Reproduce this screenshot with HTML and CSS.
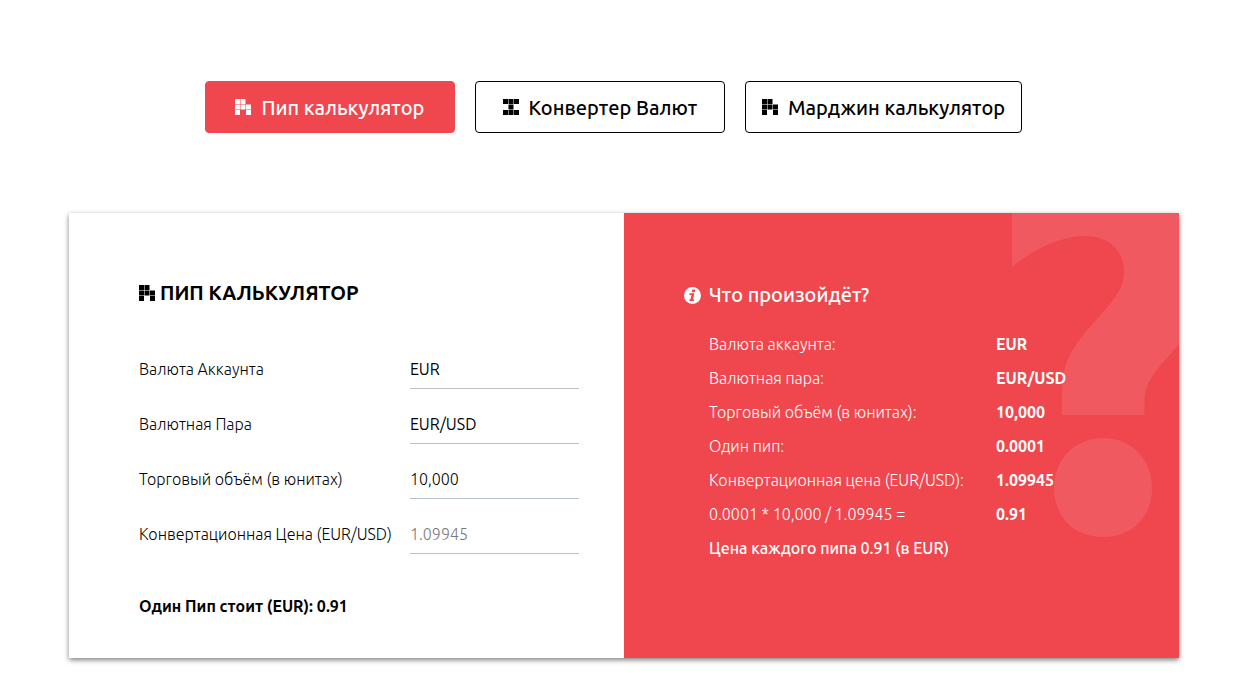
FILE: index.html
```html
<!DOCTYPE html>
<html lang="ru">
<head>
  <meta charset="UTF-8" />
  <meta name="viewport" content="width=device-width, initial-scale=1.0"/>
  <title>Пип калькулятор</title>
  <link rel="stylesheet" href="styles.css">
</head>
<body>

<svg class="sprite" aria-hidden="true">
  <symbol id="icon-pip" viewBox="0 0 16 16">
    <path d="M0 0h5v5H0zM5.500 0h5v5h-5zM0 5.500h5v5H0zM5.500 5.500h5v5h-5zM11 5.500h5v5h-5zM0 11h5v5H0zM11 11h5v5h-5z"/>
  </symbol>
  <symbol id="icon-convert" viewBox="0 0 16 16">
    <path d="M0 0h5v5H0zM5.500 0h5v5h-5zM11 0h5v5h-5zM5.500 5.500h5v5h-5zM0 11h5v5H0zM5.500 11h5v5h-5zM11 11h5v5h-5z"/>
  </symbol>
</svg>

<main class="page">
  <nav class="tabs">
    <button type="button" class="tab active"><svg class="icon"><use href="#icon-pip"/></svg>Пип калькулятор</button>
    <button type="button" class="tab"><svg class="icon"><use href="#icon-convert"/></svg>Конвертер Валют</button>
    <button type="button" class="tab"><svg class="icon"><use href="#icon-pip"/></svg>Марджин калькулятор</button>
  </nav>

  <section class="calculator">
    <form class="panel form-panel">
      <h2><svg class="icon"><use href="#icon-pip"/></svg>ПИП КАЛЬКУЛЯТОР</h2>

      <div class="field">
        <label for="account">Валюта Аккаунта</label>
        <select id="account"><option>EUR</option></select>
      </div>
      <div class="field">
        <label for="pair">Валютная Пара</label>
        <select id="pair"><option>EUR/USD</option></select>
      </div>
      <div class="field">
        <label for="volume">Торговый объём (в юнитах)</label>
        <input type="text" id="volume" value="10,000">
      </div>
      <div class="field">
        <label for="price">Конвертационная Цена (EUR/USD)</label>
        <input type="text" id="price" value="1.09945" disabled>
      </div>

      <p class="result">Один Пип стоит (EUR): 0.91</p>
    </form>

    <div class="panel info-panel">
      <svg class="question" viewBox="0 0 167 325" aria-hidden="true">
        <path d="M0 0H167V131C150 152 132.500 166 132.500 188V202H50V175C50 154 59 136 73 120C91 98 112 81 112 59C112 37 96 23 73 23C49 23 22 36 0 54Z"/>
        <path d="M91 225C120 225 140 247 140 275C140 304 120 324 91 324C62 324 42 304 42 275C42 247 62 225 91 225Z"/>
      </svg>

      <h3>
        <svg class="info-icon" viewBox="0 0 17 17" aria-hidden="true">
          <circle cx="8.500" cy="8.500" r="8.500"/>
          <path class="mark" d="M8.300 2.600H11.300L10.700 5.200H7.700ZM5.800 6.300H10.500L9 12.200H10.200L9.800 14H5.200L5.600 12.200H6.500L7.500 8H5.400Z"/>
        </svg>
        Что произойдёт?
      </h3>

      <dl class="steps">
        <dt>Валюта аккаунта:</dt><dd>EUR</dd>
        <dt>Валютная пара:</dt><dd>EUR/USD</dd>
        <dt>Торговый объём (в юнитах):</dt><dd>10,000</dd>
        <dt>Один пип:</dt><dd>0.0001</dd>
        <dt>Конвертационная цена (EUR/USD):</dt><dd>1.09945</dd>
        <dt>0.0001 * 10,000 / 1.09945 =</dt><dd>0.91</dd>
      </dl>
      <p class="total">Цена каждого пипа 0.91 (в EUR)</p>
    </div>
  </section>
</main>

</body>
</html>
```
FILE: styles.css
```css
* {
  box-sizing: border-box;
}
body {
  margin: 0;
  background: #fff;
  color: #000;
  font-family: Ubuntu, 'Open Sans', 'Noto Sans', sans-serif;
  font-size: 16px;
  font-weight: 300;
  line-height: 24px;
}
.sprite {
  display: none;
}
.page {
  padding: 81px 60px 20px 69px;
}

.tabs {
  display: flex;
  justify-content: center;
  flex-wrap: wrap;
  gap: 20px;
  padding-right: 21px;
  margin-bottom: 80px;
}
.tab {
  display: flex;
  align-items: center;
  justify-content: center;
  gap: 10px;
  min-width: 250px;
  height: 52px;
  padding: 0 16px;
  border: 1px solid #000;
  border-radius: 4px;
  background: #fff;
  color: #000;
  font-family: inherit;
  font-size: 20px;
  font-weight: 500;
  cursor: pointer;
}
.tab.active {
  background: #ef474d;
  border-color: #ef474d;
  color: #fff;
}
.icon {
  width: 16px;
  height: 16px;
  fill: currentColor;
}

.calculator {
  display: grid;
  grid-template-columns: 1fr 1fr;
  box-shadow: 0 2px 5px rgba(0, 0, 0, 0.5);
}
.form-panel {
  padding: 68px 45px 40px 70px;
}
.form-panel h2 {
  display: flex;
  align-items: center;
  gap: 5px;
  margin: 0 0 44px;
  font-size: 20px;
  font-weight: 600;
  line-height: 24px;
}
.field {
  display: grid;
  grid-template-columns: 1fr 169px;
  align-items: center;
  margin-bottom: 15px;
}
.field label {
  white-space: nowrap;
}
.field input,
.field select {
  width: 100%;
  height: 40px;
  padding: 0;
  border: none;
  border-bottom: 1px solid #b9c0c9;
  border-radius: 0;
  background: transparent;
  color: #000;
  font-family: inherit;
  font-size: 16px;
  font-weight: 400;
  appearance: none;
}
.field input {
  font-weight: 300;
}
.field input:disabled {
  color: #777;
}
.result {
  margin: 40px 0 0;
  font-weight: 600;
}

.info-panel {
  position: relative;
  padding: 70px 60px 40px;
  background: #ef474d;
  color: #fff;
}
.question {
  position: absolute;
  top: 0;
  right: 0;
  width: 167px;
  height: 325px;
  fill: rgba(255, 255, 255, 0.1);
}
.info-panel h3 {
  position: relative;
  display: flex;
  align-items: center;
  gap: 8px;
  margin: 0 0 25px;
  font-size: 20px;
  font-weight: 500;
  line-height: 24px;
}
.info-icon {
  width: 17px;
  height: 17px;
  fill: #fff;
}
.info-icon .mark {
  fill: #ef474d;
}
.steps {
  position: relative;
  display: grid;
  grid-template-columns: 7fr 3fr;
  row-gap: 10px;
  margin: 0 0 10px 25px;
}
.steps dt {
  white-space: nowrap;
}
.steps dd {
  margin: 0;
  font-weight: 700;
}
.total {
  position: relative;
  margin: 0 0 0 25px;
  font-weight: 500;
}

@media (max-width: 900px) {
  .calculator {
    grid-template-columns: 1fr;
  }
}
```
